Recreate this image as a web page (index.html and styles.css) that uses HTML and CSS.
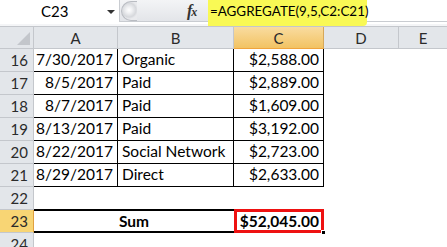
FILE: index.html
```html
<!DOCTYPE html>
<html>
<head>
<meta charset="utf-8">
<link rel="stylesheet" href="styles.css">
</head>
<body>
<div class="fbar">
  <div class="namebox"><span class="ref">C23</span><span class="caret"></span></div>
  <div class="mid"><div class="knob"></div><span class="fx">f<span class="x">x</span></span></div>
  <div class="formula"><span class="hl">=AGGREGATE(9,5,C2:C21)</span></div>
</div>
<div class="sep"></div>
<div class="sheet">
  <div class="corner"><span class="tri"></span></div>
  <div class="ch">A</div>
  <div class="ch">B</div>
  <div class="ch sel">C</div>
  <div class="ch">D</div>
  <div class="ch last">E</div>

  <div class="rh">16</div><div class="c t num">7/30/2017</div><div class="c t">Organic</div><div class="c t num">$2,588.00</div><div class="c"></div><div class="c"></div>
  <div class="rh">17</div><div class="c t num">8/5/2017</div><div class="c t">Paid</div><div class="c t num">$2,889.00</div><div class="c"></div><div class="c"></div>
  <div class="rh">18</div><div class="c t num">8/7/2017</div><div class="c t">Paid</div><div class="c t num">$1,609.00</div><div class="c"></div><div class="c"></div>
  <div class="rh">19</div><div class="c t num">8/13/2017</div><div class="c t">Paid</div><div class="c t num">$3,192.00</div><div class="c"></div><div class="c"></div>
  <div class="rh">20</div><div class="c t num">8/22/2017</div><div class="c t">Social Network</div><div class="c t num">$2,723.00</div><div class="c"></div><div class="c"></div>
  <div class="rh">21</div><div class="c t num">8/29/2017</div><div class="c t">Direct</div><div class="c t num">$2,633.00</div><div class="c"></div><div class="c"></div>
  <div class="rh">22</div><div class="c"></div><div class="c"></div><div class="c"></div><div class="c"></div><div class="c"></div>
  <div class="rh selr">23</div><div class="c sum">Sum</div><div class="c total"><span class="box">$52,045.00</span><span class="handle"></span></div><div class="c"></div><div class="c"></div>
  <div class="rh">24</div><div class="c"></div><div class="c"></div><div class="c"></div><div class="c"></div><div class="c"></div>
</div>
</body>
</html>
```

FILE: styles.css
```css
* { box-sizing: border-box; }
html, body { margin: 0; padding: 0; background: #fff; overflow: hidden; }
body { width: 447px; height: 247px; font-family: Lato, "Liberation Sans", sans-serif; color: #000; }

.fbar { display: flex; height: 22px; background: #fff; }
.namebox { width: 120px; position: relative; display: flex; align-items: center; border-right: 1px solid #c9ccd1; }
.ref { margin-left: 41px; font-size: 15px; line-height: 22px; }
.caret { position: absolute; left: 107px; top: 10px; width: 0; height: 0; border-left: 4px solid transparent; border-right: 4px solid transparent; border-top: 4px solid #333; }
.mid { width: 88px; display: flex; align-items: center; background: linear-gradient(#f3f4f6, #e3e5e9); border-bottom: 1px solid #c9ccd1; }
.knob { width: 16px; height: 20px; margin-left: 1px; border-radius: 10px 0 0 10px; border: 1px solid #b9bcc2; border-right: none; background: radial-gradient(circle at 7px 8px, #ffffff 0, #f0f1f3 3px, #d6d8dc 7px, #e9eaed 9px); }
.fx { margin-left: 50px; font-family: "Liberation Serif", serif; font-style: italic; font-weight: bold; font-size: 16px; color: #333; letter-spacing: -1px; }
.fx .x { font-size: 12px; }
.formula { flex: 1; position: relative; background: #fff; border-bottom: 1px solid #c9ccd1; }
.hl { position: absolute; left: 0; top: 0; width: 159px; height: 26px; background: #f9f955; border-radius: 0 0 4px 0; font-size: 13.4px; line-height: 22px; padding-left: 2px; z-index: 2; white-space: nowrap; }

.sep { height: 5px; background: #f4f5f7; border-top: 2px solid #fff; border-bottom: 1px solid #c4c7cc; }

.sheet { display: grid; grid-template-columns: 34px 84px 116px 90px 75px 1fr; grid-template-rows: 22px repeat(9, 23px); }
.corner { background: #e3e6ea; border-right: 1px solid #c4c7cc; border-bottom: 1px solid #c4c7cc; position: relative; }
.tri { position: absolute; right: 3px; bottom: 3px; width: 0; height: 0; border-left: 13px solid transparent; border-bottom: 13px solid #c3c6cb; }
.ch { background: #e3e6ea; border-right: 1px solid #c4c7cc; border-bottom: 1px solid #c4c7cc; display: flex; align-items: center; justify-content: center; font-size: 15px; color: #2b2b2b; }
.ch.sel { background: linear-gradient(#f9dca0, #f2c363); border-right-color: #d6a85a; border-bottom-color: #f0a43c; }
.ch.last { border-right: none; }
.rh { background: #e3e6ea; border-right: 1px solid #c4c7cc; border-bottom: 1px solid #c4c7cc; display: flex; align-items: center; justify-content: flex-end; padding-right: 5px; font-size: 15px; color: #2b2b2b; }
.rh.selr { background: #f8d574; border-right-color: #e0a040; }

.c { font-size: 15.5px; display: flex; align-items: flex-end; padding: 0 4px 3px 4px; white-space: nowrap; overflow: visible; }
.c.t { border-right: 1px solid #000; border-bottom: 1px solid #000; }
.c.num { justify-content: flex-end; }
.sum { grid-column: 2 / span 2; border-top: 2px solid #000; border-bottom: 2px solid #000; justify-content: center; font-weight: bold; margin-top: -1px; padding-bottom: 1px; }
.total { position: relative; padding: 0; margin-top: -1px; }
.box { flex: 1; height: 24px; border: 3px solid #ee1111; font-weight: bold; display: flex; align-items: center; justify-content: flex-end; padding-right: 2px; }
.handle { position: absolute; right: -2px; bottom: -2px; width: 5px; height: 5px; background: #000; border: 1px solid #fff; }
```
